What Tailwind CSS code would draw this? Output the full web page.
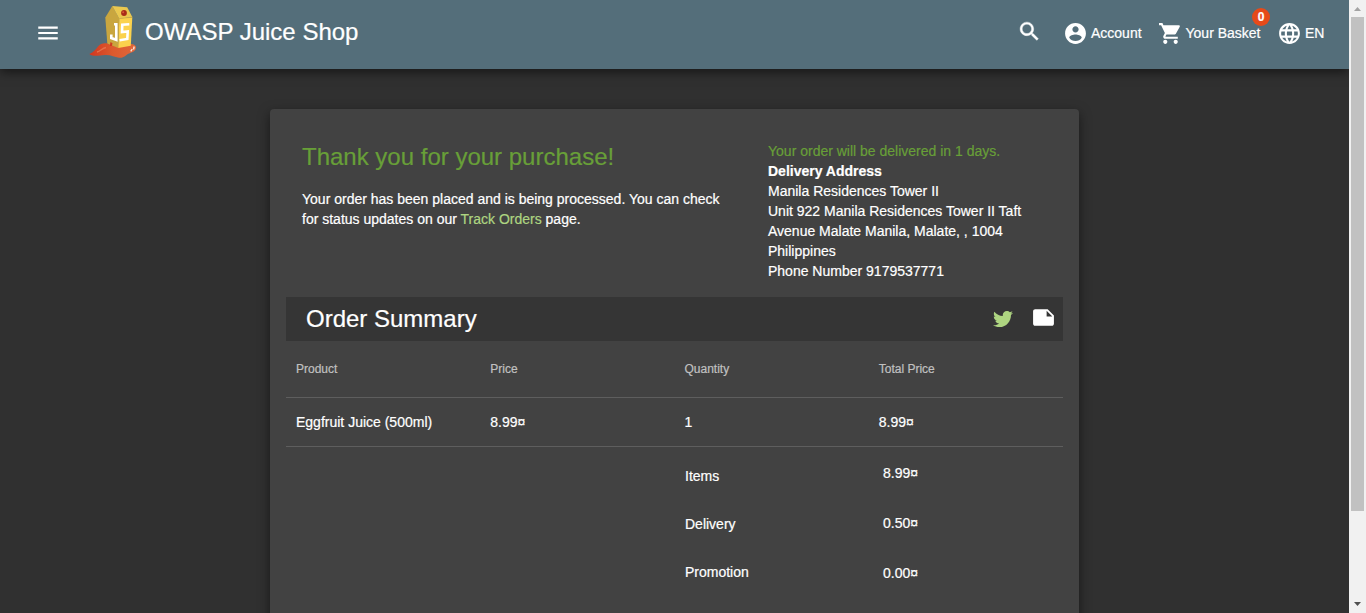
<!DOCTYPE html>
<html lang="en">
<head>
<meta charset="utf-8">
<title>OWASP Juice Shop</title>
<script src="https://cdn.jsdelivr.net/npm/@tailwindcss/browser@4"></script>
</head>
<body class="flex h-[613px] overflow-hidden bg-[#303030] font-['Liberation_Sans',Arial,sans-serif] text-sm leading-5 text-white [-webkit-text-stroke:0.2px]">
<div class="flex h-full w-[1349px] flex-col overflow-hidden">
  <header class="relative z-10 flex h-[69px] shrink-0 items-start bg-[#546e7a] shadow-[0_3px_10px_rgba(0,0,0,0.55)]">
    <svg class="mt-5 ml-[35px] size-[26px] shrink-0" viewBox="0 0 24 24" fill="#fff"><path d="M3 18h18v-2H3v2zm0-5h18v-2H3v2zm0-7v2h18V6H3z"/></svg>
    <svg class="ml-[19px] size-16 shrink-0" viewBox="0 0 64 64">
      <defs><linearGradient id="goo" x1="0" x2="1"><stop offset="0" stop-color="#d2361f"/><stop offset=".5" stop-color="#dc5a2d"/><stop offset="1" stop-color="#e0673a"/></linearGradient></defs>
      <path d="M9.300 54c3.700-1.500 6-4 8.700-7.500 2.500-3.200 6-3.500 10-2.900l22 .4c4 0 6.300 1.500 6 4-.4 3.200-3.500 4-7 5.500-3.500 1.600-5 4.800-10 4.200-4.500-.6-8-3-14-2.700-6 .3-11 2.200-15.700-1z" fill="url(#goo)"/>
      <path d="M17 52c4-1 5-4 9-4.500" fill="none" stroke="#e5704a" stroke-width="1.400"/>
      <path d="M25.300 17.500L32.300 6l7 12.500-1 29.500-11-4.500z" fill="#c9a63f"/>
      <path d="M32.300 6l14.900 1.200L52.300 17l-13 1.800z" fill="#eac850"/>
      <path d="M39.300 18.600L52.300 17.200l-1.500 28.600-12.500 2.200z" fill="#fbd24d"/>
      <path d="M39.300 18.600l13-1.400" fill="none" stroke="#c9a63f" stroke-width=".6"/>
      <circle cx="44" cy="13" r="2.900" fill="#a82c18"/><circle cx="43.200" cy="12.300" r="1" fill="#d9573a"/>
      <path d="M34 24.200h2.300v15.600l-5-1.800v-3.500M49.300 24.300l-7 .4-.3 7.300 5.700-.5-.4 7.500-7.700 1.300" fill="none" stroke="#fff" stroke-width="2.600"/>
      <path d="M30.500 42l2 1.200-.7 2.800h-2z" fill="#cf3a22"/>
      <path d="M50.800 51.300l1.400-2.300M53.500 49.500l.7-3" stroke="#fbe3d8" stroke-width="1.400"/>
    </svg>
    <h1 class="mt-4 ml-px text-2xl leading-8">OWASP Juice Shop</h1>
    <nav class="ml-auto flex h-[66px] w-[332px] shrink-0 items-center">
      <svg class="-mt-[3px] size-[25px] shrink-0" viewBox="0 0 24 24" fill="#fff" stroke="#fff" stroke-width=".4"><path d="M15.500 14h-.79l-.28-.27C15.410 12.590 16 11.110 16 9.500 16 5.910 13.090 3 9.500 3S3 5.910 3 9.500 5.910 16 9.500 16c1.610 0 3.090-.59 4.230-1.570l.27.28v.79l5 4.990L20.490 19l-4.990-5zm-6 0C7.010 14 5 11.990 5 9.500S7.010 5 9.500 5 14 7.010 14 9.500 11.990 14 9.500 14z"/></svg>
      <a class="ml-[21px] flex w-[94.500px] shrink-0 items-center gap-[3px] whitespace-nowrap">
        <svg class="size-[25px] shrink-0" viewBox="0 0 24 24" fill="#fff"><path d="M12 2C6.480 2 2 6.480 2 12s4.480 10 10 10 10-4.480 10-10S17.520 2 12 2zm0 3c1.660 0 3 1.340 3 3s-1.340 3-3 3-3-1.340-3-3 1.340-3 3-3zm0 14.200c-2.500 0-4.710-1.280-6-3.220.030-1.990 4-3.080 6-3.080 1.990 0 5.970 1.090 6 3.080-1.290 1.940-3.500 3.220-6 3.220z"/></svg>
        <span>Account</span></a>
      <a class="relative flex w-[119.500px] shrink-0 items-center gap-[3px] whitespace-nowrap">
        <svg class="size-[25px] shrink-0" viewBox="0 0 24 24" fill="#fff"><path d="M7 18c-1.100 0-1.990.9-1.990 2S5.900 22 7 22s2-.9 2-2-.9-2-2-2zM1 2v2h2l3.600 7.590-1.350 2.450c-.16.28-.25.61-.25.96 0 1.100.9 2 2 2h12v-2H7.420c-.14 0-.25-.11-.25-.25l.03-.12.9-1.630h7.450c.75 0 1.410-.41 1.750-1.030l3.580-6.490c.08-.14.12-.31.12-.48 0-.55-.45-1-1-1H5.210l-.94-2H1zm16 16c-1.100 0-1.990.9-1.990 2s.89 2 1.990 2 2-.9 2-2-.9-2-2-2z"/></svg>
        <span>Your Basket</span>
        <span class="absolute -top-[12.500px] left-[94.500px] flex size-[18px] items-center justify-center rounded-full bg-[#e64a19] text-xs font-bold">0</span></a>
      <a class="flex items-center gap-[3px]">
        <svg class="size-[25px] shrink-0" viewBox="0 0 24 24" fill="#fff"><path d="M11.990 2C6.470 2 2 6.480 2 12s4.470 10 9.990 10C17.520 22 22 17.520 22 12S17.520 2 11.990 2zm6.930 6h-2.950c-.32-1.250-.78-2.450-1.380-3.560 1.840.63 3.370 1.910 4.330 3.560zM12 4.040c.83 1.200 1.480 2.530 1.910 3.960h-3.820c.43-1.430 1.080-2.760 1.910-3.960zM4.260 14C4.100 13.360 4 12.690 4 12s.1-1.360.26-2h3.380c-.08.66-.14 1.320-.14 2s.06 1.340.14 2H4.260zm.82 2h2.950c.32 1.250.78 2.450 1.380 3.560-1.840-.63-3.370-1.900-4.330-3.560zm2.950-8H5.080c.96-1.660 2.490-2.930 4.330-3.560C8.810 5.550 8.350 6.750 8.030 8zM12 19.960c-.83-1.200-1.480-2.530-1.910-3.960h3.820c-.43 1.430-1.080 2.760-1.910 3.960zM14.340 14H9.660c-.09-.66-.16-1.320-.16-2s.07-1.350.16-2h4.680c.09.65.16 1.320.16 2s-.07 1.340-.16 2zm.25 5.560c.6-1.110 1.060-2.310 1.380-3.560h2.950c-.96 1.650-2.490 2.930-4.330 3.560zM16.360 14c.08-.66.14-1.320.14-2s-.06-1.340-.14-2h3.380c.16.64.26 1.310.26 2s-.1 1.360-.26 2h-3.380z"/></svg>
        <span>EN</span></a>
    </nav>
  </header>
  <main class="mx-auto mt-10 h-[600px] w-[809px] shrink-0 rounded bg-[#424242] px-4 pt-8 shadow-[0_4px_12px_rgba(0,0,0,0.5)]">
    <section class="flex h-[156px] pl-4">
      <div class="w-[466px]">
        <h2 class="text-2xl leading-8 text-[#689f38]">Thank you for your purchase!</h2>
        <p class="mt-4 w-[430px]">Your order has been placed and is being processed. You can check<br>for status updates on our <a class="text-[#aed581]">Track Orders</a> page.</p>
      </div>
      <div class="whitespace-nowrap">
        <p class="text-[#689f38]">Your order will be delivered in 1 days.</p>
        <p class="font-bold">Delivery Address</p>
        <p>Manila Residences Tower II</p>
        <p>Unit 922 Manila Residences Tower II Taft</p>
        <p>Avenue Malate Manila, Malate, , 1004</p>
        <p>Philippines</p>
        <p>Phone Number 9179537771</p>
      </div>
    </section>
    <div class="flex h-11 items-center bg-[#353535] pr-[7px] pl-5">
      <h2 class="text-2xl leading-8">Order Summary</h2>
      <svg class="-mt-px ml-auto size-5" viewBox="0 0 512 512" fill="#aed581"><path d="M459.370 151.716c.325 4.548.325 9.097.325 13.645 0 138.720-105.583 298.558-298.558 298.558-59.452 0-114.680-17.219-161.137-47.106 8.447.974 16.568 1.299 25.340 1.299 49.055 0 94.213-16.568 130.274-44.832-46.132-.975-84.792-31.188-98.112-72.772 6.498.974 12.995 1.624 19.818 1.624 9.421 0 18.843-1.300 27.614-3.573-48.081-9.747-84.143-51.980-84.143-102.985v-1.299c13.969 7.797 30.214 12.670 47.431 13.319-28.264-18.843-46.781-51.005-46.781-87.391 0-19.492 5.197-37.360 14.294-52.954 51.655 63.675 129.300 105.258 216.365 109.807-1.624-7.797-2.599-15.918-2.599-24.040 0-57.828 46.782-104.934 104.934-104.934 30.213 0 57.502 12.670 76.670 33.137 23.715-4.548 46.456-13.320 66.599-25.340-7.798 24.366-24.366 44.833-46.132 57.827 21.117-2.273 41.584-8.122 60.426-16.243-14.292 20.791-32.161 39.308-52.628 54.253z"/></svg>
      <svg class="-mt-[3px] ml-[18px] size-[25px]" viewBox="0 0 24 24" fill="#fff"><path d="M22 10l-6-6H4c-1.100 0-2 .9-2 2v12.010c0 1.100.9 1.990 2 1.990l16-.01c1.100 0 2-.89 2-1.990v-8zm-7-4.500l5.500 5.500H15V5.500z"/></svg>
    </div>
    <div class="grid h-[57px] grid-cols-4 items-center border-b border-[#5e5e5e] text-xs text-[#c0c0c0]">
      <span class="pl-[10px]">Product</span><span class="pl-[10px]">Price</span><span class="pl-[10px]">Quantity</span><span class="pl-[10px]">Total Price</span>
    </div>
    <div class="grid h-[49px] grid-cols-4 items-center border-b border-[#5e5e5e]">
      <span class="pl-[10px]">Eggfruit Juice (500ml)</span><span class="pl-[10px]">8.99¤</span><span class="pl-[10px]">1</span><span class="pl-[10px]">8.99¤</span>
    </div>
    <div class="flex pl-[399px]">
      <div class="flex w-[198px] flex-col gap-7 pt-[19px]"><span>Items</span><span>Delivery</span><span>Promotion</span></div>
      <div class="flex flex-col gap-[30px] pt-4"><span>8.99¤</span><span>0.50¤</span><span>0.00¤</span></div>
    </div>
  </main>
</div>
<aside class="flex w-[17px] shrink-0 flex-col items-center bg-[#f1f1f1]">
  <svg class="h-[17px] w-[17px] shrink-0" viewBox="0 0 17 17"><path d="M5 11h7L8.500 7z" fill="#a3a3a3"/></svg>
  <div class="h-[494px] w-[13px] bg-[#c1c1c1]"></div>
  <svg class="mt-auto h-[17px] w-[17px] shrink-0" viewBox="0 0 17 17"><path d="M5 6h7l-3.500 4z" fill="#505050"/></svg>
</aside>
</body>
</html>
